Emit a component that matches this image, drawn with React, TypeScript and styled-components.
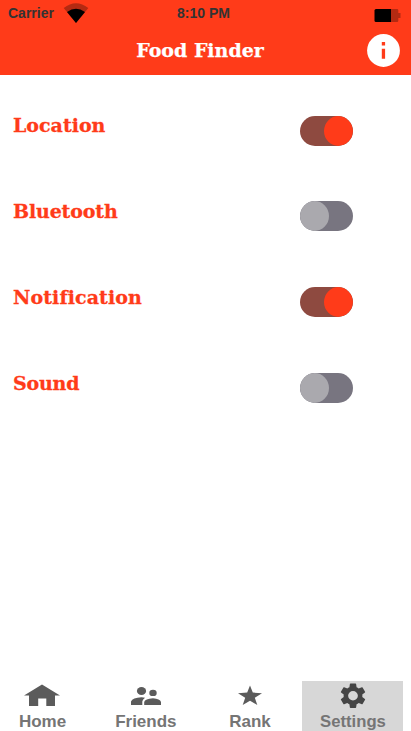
import React from 'react';
import styled, { createGlobalStyle } from 'styled-components';

const Global = createGlobalStyle`
  * { box-sizing: border-box; }
  body { margin: 0; background: #fff; overflow: hidden; }
`;

const Screen = styled.div`
  width: 411px;
  height: 731px;
  display: flex;
  flex-direction: column;
  overflow: hidden;
  background: #fff;
  font-family: 'Liberation Sans', Arial, sans-serif;
`;

const Header = styled.header`
  height: 75px;
  flex: none;
  background: #ff3b19;
`;

const StatusBar = styled.div`
  height: 27px;
  display: grid;
  grid-template-columns: 1fr auto 1fr;
  align-items: start;
  padding: 0 10px 0 8px;
  color: #333;
  font-size: 14px;
  font-weight: bold;
  line-height: 16px;
`;

const Carrier = styled.div`
  display: flex;
  gap: 9px;
  padding-top: 5px;
  svg { margin-top: -3px; }
`;

const Clock = styled.div`
  padding-top: 5px;
  margin-right: 2px;
`;

const Battery = styled.svg`
  justify-self: end;
  margin-top: 9px;
`;

const TitleBar = styled.div`
  height: 48px;
  display: grid;
  grid-template-columns: 1fr auto 1fr;
  align-items: center;
  padding: 0 11px 0 0;
`;

const Title = styled.h1`
  margin: 0 0 2px;
  grid-column: 2;
  color: #fff;
  font: bold 19px/24px 'DejaVu Serif', serif;
  -webkit-text-stroke: 0.25px;
`;

const Info = styled.svg`
  justify-self: end;
  margin-bottom: 2px;
`;

const Options = styled.main`
  flex: 1;
  padding-top: 12.7px;
`;

const Option = styled.div`
  height: 85.8px;
  display: flex;
  align-items: center;
  justify-content: space-between;
  padding: 0 58px 0 13px;
`;

const Label = styled.span<{ $spacing: number }>`
  color: #ff3b19;
  font: bold 19px/24px 'DejaVu Serif', serif;
  -webkit-text-stroke: 0.3px;
  font-variant-ligatures: none;
  letter-spacing: ${(p) => p.$spacing}px;
  padding-bottom: 10.8px;
`;

const Toggle = styled.button<{ $on: boolean }>`
  width: 53px;
  height: 30px;
  padding: 0;
  border: 0;
  border-radius: 15px;
  display: flex;
  justify-content: ${(p) => (p.$on ? 'flex-end' : 'flex-start')};
  overflow: hidden;
  background: ${(p) => (p.$on ? '#8e4a40' : '#787580')};
`;

const Knob = styled.span<{ $on: boolean }>`
  width: 29px;
  height: 30px;
  border-radius: 50%;
  background: ${(p) => (p.$on ? '#ff3b19' : '#aaa9ae')};
`;

const Tabs = styled.nav`
  height: 50px;
  flex: none;
  margin-left: -8px;
  display: grid;
  grid-template-columns: repeat(4, 101px);
  column-gap: 2.33px;
`;

const Tab = styled.a<{ $active?: boolean; $shift?: number }>`
  display: flex;
  flex-direction: column;
  align-items: center;
  padding-left: ${(p) => p.$shift ?? 0}px;
  background: ${(p) => (p.$active ? '#d7d7d7' : 'transparent')};
  color: #757575;
  font-size: ${(p) => (p.$active ? 16.7 : 17)}px;
  font-weight: bold;
  line-height: 22px;
  svg { flex: none; fill: ${(p) => (p.$active ? '#454545' : '#5b5b5b')}; }
`;

const options = [
  { name: 'Location', on: true, spacing: 0 },
  { name: 'Bluetooth', on: false, spacing: -0.15 },
  { name: 'Notification', on: true, spacing: 0.1 },
  { name: 'Sound', on: false, spacing: -0.2 },
];

export default function App() {
  return (
    <Screen>
      <Global />
      <Header>
        <StatusBar>
          <Carrier>
            Carrier
            <svg width="26" height="22" viewBox="0 0 26 22">
              <path d="M.7 6Q13-3.7 25.3 6L13 21Z" fill="#b32a12" />
              <path d="M4 10Q13 3.7 22 10L13 21Z" fill="#000" />
            </svg>
          </Carrier>
          <Clock>8:10 PM</Clock>
          <Battery width="27" height="13" viewBox="0 0 27 13">
            <path d="M17 0h6q1.3 0 1.3 1.3V4H26.5v5h-2.2v2.7q0 1.3-1.3 1.3h-6Z" fill="#b32a12" />
            <path d="M2 0H17v13H2Q.5 13 .5 11.5v-10Q.5 0 2 0Z" fill="#000" />
          </Battery>
        </StatusBar>
        <TitleBar>
          <Title>Food Finder</Title>
          <Info width="33" height="33" viewBox="0 0 33 33">
            <circle cx="16.5" cy="16.5" r="16.4" fill="#fff" />
            <path d="M14.8 8h3.3v3.4h-3.3zM14.8 14.7h3.3v10h-3.3z" fill="#ff3b19" />
          </Info>
        </TitleBar>
      </Header>
      <Options>
        {options.map(({ name, on, spacing }) => (
          <Option key={name}>
            <Label $spacing={spacing}>{name}</Label>
            <Toggle $on={on} role="switch" aria-checked={on} aria-label={name}>
              <Knob $on={on} />
            </Toggle>
          </Option>
        ))}
      </Options>
      <Tabs>
        <Tab>
          <svg width="38" height="30" viewBox="0 0 38 30">
            <path d="M18 3.5 36 14.5H31V25H22.3V17.5H14.2V25H5V14.5H0Z" />
          </svg>
          Home
        </Tab>
        <Tab>
          <svg width="30" height="30" viewBox="0 0 30 30">
            <ellipse cx="10.5" cy="10" rx="4.6" ry="4" />
            <ellipse cx="22" cy="11.9" rx="3.7" ry="3.2" />
            <path d="M0 24V20.5Q1.5 16.7 10.5 16.2Q12.6 16.3 14 16.7Q11.4 18.7 11.3 20.5V24Z" />
            <path d="M13.2 24V21Q14 17.9 22 17.3Q29 17.7 30 21V24Z" />
          </svg>
          Friends
        </Tab>
        <Tab $shift={1.6}>
          <svg width="24" height="30" viewBox="0 0 24 30">
            <path d="M12 4.5 14.8 11.6 24 12.2 16.8 16.8 19.3 24 12 19.7 4.7 24 7.2 16.8 0 12.2 9.2 11.6Z" />
          </svg>
          Rank
        </Tab>
        <Tab $active $shift={1}>
          <svg width="30" height="30" viewBox="0 0 30 30">
            <path
              transform="translate(0 .1) scale(1.25 1.22)"
              d="M19.43 12.98c.04-.32.07-.64.07-.98s-.03-.66-.07-.98l2.11-1.65c.19-.15.24-.42.12-.64l-2-3.46c-.12-.22-.39-.3-.61-.22l-2.49 1c-.52-.4-1.08-.73-1.69-.98l-.38-2.65C14.46 2.18 14.25 2 14 2h-4c-.25 0-.46.18-.49.42l-.38 2.65c-.61.25-1.17.59-1.69.98l-2.49-1c-.23-.09-.49 0-.61.22l-2 3.46c-.13.22-.07.49.12.64l2.11 1.65c-.04.32-.07.65-.07.98s.03.66.07.98l-2.11 1.65c-.19.15-.24.42-.12.64l2 3.46c.12.22.39.3.61.22l2.49-1c.52.4 1.08.73 1.69.98l.38 2.65c.03.24.24.42.49.42h4c.25 0 .46-.18.49-.42l.38-2.65c.61-.25 1.17-.59 1.69-.98l2.49 1c.23.09.49 0 .61-.22l2-3.46c.12-.22.07-.49-.12-.64l-2.11-1.65zM12 15.9a3.9 3.9 0 1 1 0-7.8 3.9 3.9 0 0 1 0 7.8z"
            />
          </svg>
          Settings
        </Tab>
      </Tabs>
    </Screen>
  );
}
